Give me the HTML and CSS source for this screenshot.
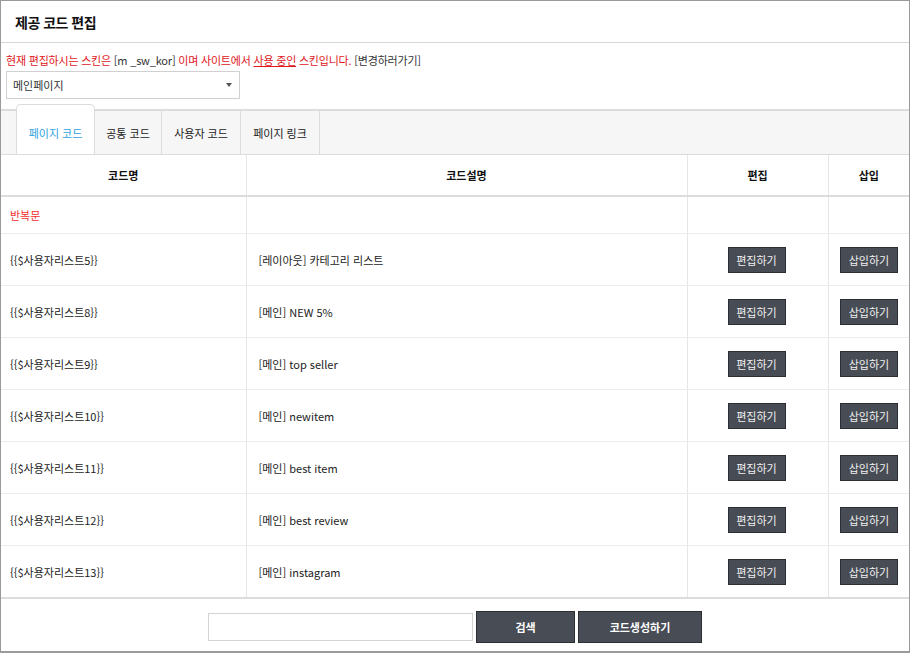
FILE: index.html
```html
<!DOCTYPE html>
<html lang="ko">
<head>
<meta charset="UTF-8">
<meta name="viewport" content="width=device-width, initial-scale=1.0">
<title>제공 코드 편집</title>
<link rel="stylesheet" href="styles.css">
</head>
<body>
<div class="frame">
<div class="header">
<h1>제공 코드 편집</h1>
</div>
<div class="notice">
<p>현재 편집하시는 스킨은 <span class="dark">[m _sw_kor]</span> 이며 사이트에서 <u>사용 중인</u> 스킨입니다. <a class="dark" href="#">[변경하러가기]</a></p>
<div class="select">
<span>메인페이지</span>
<span class="caret"></span>
</div>
</div>
<div class="tabs">
<div class="tab active">페이지 코드</div>
<div class="tab">공통 코드</div>
<div class="tab">사용자 코드</div>
<div class="tab">페이지 링크</div>
</div>
<table class="codes">
<colgroup>
<col style="width:245px">
<col style="width:441px">
<col style="width:141px">
<col style="width:81px">
</colgroup>
<thead>
<tr>
<th>코드명</th>
<th>코드설명</th>
<th>편집</th>
<th>삽입</th>
</tr>
</thead>
<tbody>
<tr class="group">
<td class="red">반복문</td>
<td></td>
<td></td>
<td></td>
</tr>
<tr>
<td>{{$사용자리스트5}}</td>
<td>[레이아웃] 카테고리 리스트</td>
<td class="btn-cell"><button class="btn">편집하기</button></td>
<td class="btn-cell"><button class="btn">삽입하기</button></td>
</tr>
<tr>
<td>{{$사용자리스트8}}</td>
<td>[메인] NEW 5%</td>
<td class="btn-cell"><button class="btn">편집하기</button></td>
<td class="btn-cell"><button class="btn">삽입하기</button></td>
</tr>
<tr>
<td>{{$사용자리스트9}}</td>
<td>[메인] top seller</td>
<td class="btn-cell"><button class="btn">편집하기</button></td>
<td class="btn-cell"><button class="btn">삽입하기</button></td>
</tr>
<tr>
<td>{{$사용자리스트10}}</td>
<td>[메인] newitem</td>
<td class="btn-cell"><button class="btn">편집하기</button></td>
<td class="btn-cell"><button class="btn">삽입하기</button></td>
</tr>
<tr>
<td>{{$사용자리스트11}}</td>
<td>[메인] best item</td>
<td class="btn-cell"><button class="btn">편집하기</button></td>
<td class="btn-cell"><button class="btn">삽입하기</button></td>
</tr>
<tr>
<td>{{$사용자리스트12}}</td>
<td>[메인] best review</td>
<td class="btn-cell"><button class="btn">편집하기</button></td>
<td class="btn-cell"><button class="btn">삽입하기</button></td>
</tr>
<tr>
<td>{{$사용자리스트13}}</td>
<td>[메인] instagram</td>
<td class="btn-cell"><button class="btn">편집하기</button></td>
<td class="btn-cell"><button class="btn">삽입하기</button></td>
</tr>
</tbody>
</table>
<div class="footer">
<input type="text" class="search">
<button class="btn-big">검색</button>
<button class="btn-big wide">코드생성하기</button>
</div>
</div>
</body>
</html>
```

FILE: styles.css
```css
html, body {
margin: 0;
padding: 0;
}
body {
font-family: "Noto Sans CJK KR", "Noto Sans", sans-serif;
font-size: 11px;
color: #222;
background: #fff;
}
.frame {
box-sizing: border-box;
width: 910px;
height: 653px;
border: 1px solid #9a9a9a;
border-bottom-width: 2px;
overflow: hidden;
}
.header {
height: 41px;
border-bottom: 1px solid #d6d6d6;
display: flex;
align-items: center;
padding-left: 14px;
}
.header h1 {
margin: 0;
font-size: 14px;
font-weight: bold;
color: #111;
letter-spacing: -0.5px;
}
.notice {
padding: 9px 5px 10px;
}
.notice p {
margin: 0 0 3px;
color: #e0161c;
font-size: 11px;
letter-spacing: -0.2px;
line-height: 16px;
}
.notice .dark {
color: #333;
text-decoration: none;
}
.select {
box-sizing: border-box;
width: 234px;
height: 28px;
border: 1px solid #d0d0d0;
display: flex;
align-items: center;
justify-content: space-between;
padding: 0 7px 0 6px;
font-size: 11px;
color: #333;
}
.caret {
width: 0;
height: 0;
border-left: 3px solid transparent;
border-right: 3px solid transparent;
border-top: 4px solid #555;
}
.tabs {
height: 43px;
background: #f6f6f6;
border-top: 2px solid #dcdcdc;
border-bottom: 1px solid #dcdcdc;
display: flex;
padding-left: 15px;
}
.tab {
box-sizing: border-box;
width: 79px;
height: 43px;
display: flex;
align-items: center;
justify-content: center;
border-right: 1px solid #dcdcdc;
color: #222;
font-size: 11px;
}
.tab:nth-child(2) {
width: 67px;
}
.tab.active {
height: 50px;
margin-top: -7px;
background: #fff;
border: 1px solid #dcdcdc;
border-bottom: none;
border-radius: 5px 5px 0 0;
color: #2ea3de;
padding-top: 6px;
}
.codes {
width: 908px;
border-collapse: collapse;
table-layout: fixed;
}
.codes th, .codes td {
border-right: 1px solid #e6e6e6;
border-bottom: 1px solid #ececec;
padding: 0 9px;
text-align: left;
font-size: 11px;
color: #222;
}
.codes th:last-child, .codes td:last-child {
border-right: none;
}
.codes th {
height: 40px;
text-align: center;
font-weight: bold;
color: #111;
border-bottom: 2px solid #dcdcdc;
}
.codes td {
height: 51px;
}
.codes td:nth-child(2) {
padding-left: 12px;
}
.codes tr.group td {
height: 36px;
}
.codes tbody tr:last-child td {
border-bottom: 2px solid #dcdcdc;
}
.red {
color: #f0302c !important;
}
.codes td.btn-cell {
text-align: right;
padding: 0 42px 0 0;
}
.codes td.btn-cell:last-child {
padding-right: 11px;
}
.btn {
width: 58px;
height: 26px;
background: #474c55;
border: 1px solid #2b2e33;
color: #f0f0f0;
font-family: inherit;
font-size: 11px;
padding: 0;
cursor: pointer;
}
.footer {
display: flex;
justify-content: center;
align-items: center;
gap: 3px;
padding-top: 12px;
}
.search {
box-sizing: border-box;
width: 265px;
height: 28px;
border: 1px solid #d4d4d4;
}
.btn-big {
width: 99px;
height: 32px;
background: #474c55;
border: 1px solid #2b2e33;
color: #fff;
font-family: inherit;
font-size: 11px;
font-weight: bold;
padding: 0;
}
.btn-big.wide {
width: 124px;
}
```
